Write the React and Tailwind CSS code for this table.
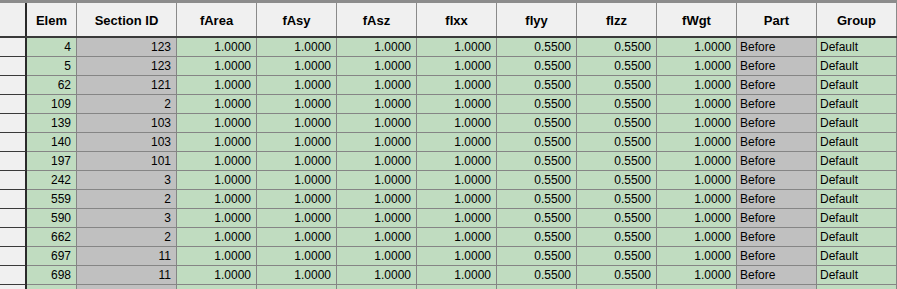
import React from 'react';

const columns = [
  { label: 'fArea', key: 'fArea' },
  { label: 'fAsy', key: 'fAsy' },
  { label: 'fAsz', key: 'fAsz' },
  { label: 'fIxx', key: 'fIxx' },
  { label: 'fIyy', key: 'fIyy' },
  { label: 'fIzz', key: 'fIzz' },
  { label: 'fWgt', key: 'fWgt' },
];

// Éléments affichés dans la grille
const rows = [
  [4, 123], [5, 123], [62, 121], [109, 2], [139, 103], [140, 103], [197, 101],
  [242, 3], [559, 2], [590, 3], [662, 2], [697, 11], [698, 11],
].map(([elem, section]) => ({
  elem,
  section,
  fArea: '1.0000',
  fAsy: '1.0000',
  fAsz: '1.0000',
  fIxx: '1.0000',
  fIyy: '0.5500',
  fIzz: '0.5500',
  fWgt: '1.0000',
  part: 'Before',
  group: 'Default',
}));

const headCell = 'h-full flex items-center justify-center pt-[2px] border-r border-[#8a8a8a] bg-[#f0f0f0] font-bold text-[13px] text-black';
const bodyCell = 'h-full flex items-center border-r border-b border-[#858585] text-[12px] text-black leading-none';

const App = () => {
  return (
    <div className="w-[897px] h-[289px] overflow-hidden bg-white" style={{ fontFamily: '"Liberation Sans", Arial, sans-serif' }}>
      {/* Bandeau supérieur */}
      <div className="h-[3px] bg-[#8c8c8c]" />

      {/* En-tête */}
      <div className="flex h-[35px] border-b-2 border-[#3a3a3a]">
        <div className={`${headCell} w-[27px] border-r-2 border-r-[#2a2a2a]`} />
        <div className={`${headCell} w-[50px]`}>Elem</div>
        <div className={`${headCell} w-[100px]`}>Section ID</div>
        {columns.map((c) => (
          <div key={c.key} className={`${headCell} w-[80px]`}>{c.label}</div>
        ))}
        <div className={`${headCell} w-[80px]`}>Part</div>
        <div className={`${headCell} w-[80px]`}>Group</div>
      </div>

      {/* Lignes */}
      {rows.map((r) => (
        <div key={r.elem} className="flex h-[19px]">
          <div className="h-full w-[27px] bg-[#f0f0f0] border-r-2 border-b border-r-[#2a2a2a] border-b-[#3a3a3a]" />
          <div className={`${bodyCell} w-[50px] bg-[#c0dcc0] justify-end pr-[5px]`}>{r.elem}</div>
          <div className={`${bodyCell} w-[100px] bg-[#c0c0c0] justify-end pr-[5px]`}>{r.section}</div>
          {columns.map((c) => (
            <div key={c.key} className={`${bodyCell} w-[80px] bg-[#c0dcc0] justify-end pr-[5px]`}>{r[c.key]}</div>
          ))}
          <div className={`${bodyCell} w-[80px] bg-[#c0c0c0] pl-[3px]`}>{r.part}</div>
          <div className={`${bodyCell} w-[80px] bg-[#c0dcc0] pl-[3px]`}>{r.group}</div>
        </div>
      ))}

      {/* Ligne suivante, coupée par le bas de la fenêtre */}
      <div className="flex h-[19px]">
        <div className="h-full w-[27px] bg-[#f0f0f0] border-r-2 border-r-[#2a2a2a]" />
        <div className="h-full w-[50px] bg-[#c0dcc0] border-r border-[#858585]" />
        <div className="h-full w-[100px] bg-[#c0c0c0] border-r border-[#858585]" />
        {columns.map((c) => (
          <div key={c.key} className="h-full w-[80px] bg-[#c0dcc0] border-r border-[#858585]" />
        ))}
        <div className="h-full w-[80px] bg-[#c0c0c0] border-r border-[#858585]" />
        <div className="h-full w-[80px] bg-[#c0dcc0] border-r border-[#858585]" />
      </div>
    </div>
  );
};

export default App;
